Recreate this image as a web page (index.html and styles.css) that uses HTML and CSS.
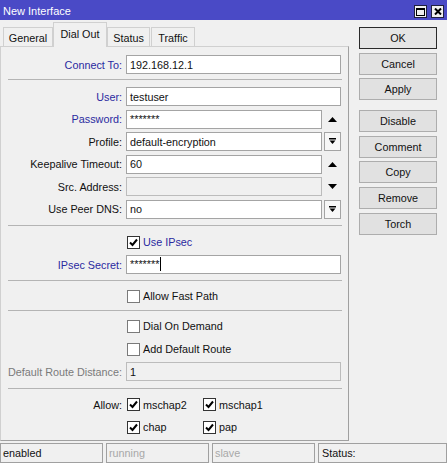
FILE: index.html
```html
<!DOCTYPE html>
<html>
<head>
<meta charset="utf-8">
<link rel="stylesheet" href="styles.css">
</head>
<body>
<div class="window">
  <div class="titlebar">
    <span class="title">New Interface</span>
    <div class="tb-btns">
      <span class="tb-btn"><svg width="9" height="8" viewBox="0 0 9 8"><rect x="0.5" y="0.5" width="8" height="7" fill="none" stroke="#000"/><rect x="0" y="0" width="9" height="2" fill="#000"/></svg></span>
      <span class="tb-btn"><svg width="8" height="7" viewBox="0 0 8 7"><path d="M1 0.5L7 6.5M7 0.5L1 6.5" stroke="#000" stroke-width="2" fill="none"/></svg></span>
    </div>
  </div>
  <div class="main">
    <div class="left">
      <div class="tabs">
        <div class="tab t-general">General</div>
        <div class="tab t-dial active">Dial Out</div>
        <div class="tab t-status">Status</div>
        <div class="tab t-traffic">Traffic</div>
      </div>
      <div class="panel">
        <div class="row first">
          <span class="lbl blue">Connect To:</span>
          <div class="field w-long">192.168.12.1</div>
        </div>
        <div class="sep s1"></div>
        <div class="row r-user">
          <span class="lbl blue">User:</span>
          <div class="field w-long">testuser</div>
        </div>
        <div class="row">
          <span class="lbl blue">Password:</span>
          <div class="field w-short stars">*******</div>
          <span class="tri"><svg width="9" height="5" viewBox="0 0 9 5"><path d="M0 5L4.5 0L9 5z" fill="#000"/></svg></span>
        </div>
        <div class="row">
          <span class="lbl">Profile:</span>
          <div class="field w-short">default-encryption</div>
          <span class="dd"><svg width="7" height="7" viewBox="0 0 7 7"><rect x="0" y="0" width="7" height="1.5" fill="#000"/><path d="M0.5 2.5H6.5L3.5 6z" fill="#000"/></svg></span>
        </div>
        <div class="row">
          <span class="lbl">Keepalive Timeout:</span>
          <div class="field w-short">60</div>
          <span class="tri"><svg width="9" height="5" viewBox="0 0 9 5"><path d="M0 5L4.5 0L9 5z" fill="#000"/></svg></span>
        </div>
        <div class="row">
          <span class="lbl">Src. Address:</span>
          <div class="field w-short disabled"></div>
          <span class="tri"><svg width="9" height="5" viewBox="0 0 9 5"><path d="M0 0L9 0L4.5 5z" fill="#000"/></svg></span>
        </div>
        <div class="row">
          <span class="lbl">Use Peer DNS:</span>
          <div class="field w-short">no</div>
          <span class="dd"><svg width="7" height="7" viewBox="0 0 7 7"><rect x="0" y="0" width="7" height="1.5" fill="#000"/><path d="M0.5 2.5H6.5L3.5 6z" fill="#000"/></svg></span>
        </div>
        <div class="sep s2"></div>
        <div class="row r-ipsec">
          <span class="lbl"></span>
          <span class="opt">
            <span class="cb checked"><svg width="11" height="11" viewBox="0 0 11 11"><path d="M2 5.5L4.5 8L9 2.5" stroke="#000" stroke-width="2" fill="none"/></svg></span>
            <span class="cb-text blue">Use IPsec</span>
          </span>
        </div>
        <div class="row">
          <span class="lbl blue">IPsec Secret:</span>
          <div class="field w-long stars">*******<span class="caret"></span></div>
        </div>
        <div class="sep s3"></div>
        <div class="row r-fast">
          <span class="lbl"></span>
          <span class="opt">
            <span class="cb"></span>
            <span class="cb-text">Allow Fast Path</span>
          </span>
        </div>
        <div class="sep s4"></div>
        <div class="row r-dial">
          <span class="lbl"></span>
          <span class="opt">
            <span class="cb"></span>
            <span class="cb-text">Dial On Demand</span>
          </span>
        </div>
        <div class="row">
          <span class="lbl"></span>
          <span class="opt">
            <span class="cb"></span>
            <span class="cb-text">Add Default Route</span>
          </span>
        </div>
        <div class="row">
          <span class="lbl gray">Default Route Distance:</span>
          <div class="field w-long disabled">1</div>
        </div>
        <div class="sep s5"></div>
        <div class="row r-allow">
          <span class="lbl">Allow:</span>
          <span class="opt w76">
            <span class="cb checked"><svg width="11" height="11" viewBox="0 0 11 11"><path d="M2 5.5L4.5 8L9 2.5" stroke="#000" stroke-width="2" fill="none"/></svg></span>
            <span class="cb-text">mschap2</span>
          </span>
          <span class="opt">
            <span class="cb checked"><svg width="11" height="11" viewBox="0 0 11 11"><path d="M2 5.5L4.5 8L9 2.5" stroke="#000" stroke-width="2" fill="none"/></svg></span>
            <span class="cb-text">mschap1</span>
          </span>
        </div>
        <div class="row">
          <span class="lbl"></span>
          <span class="opt w76">
            <span class="cb checked"><svg width="11" height="11" viewBox="0 0 11 11"><path d="M2 5.5L4.5 8L9 2.5" stroke="#000" stroke-width="2" fill="none"/></svg></span>
            <span class="cb-text">chap</span>
          </span>
          <span class="opt">
            <span class="cb checked"><svg width="11" height="11" viewBox="0 0 11 11"><path d="M2 5.5L4.5 8L9 2.5" stroke="#000" stroke-width="2" fill="none"/></svg></span>
            <span class="cb-text">pap</span>
          </span>
        </div>
      </div>
    </div>
    <div class="buttons">
      <div class="btn ok">OK</div>
      <div class="btn">Cancel</div>
      <div class="btn">Apply</div>
      <div class="btn b-disable">Disable</div>
      <div class="btn">Comment</div>
      <div class="btn">Copy</div>
      <div class="btn">Remove</div>
      <div class="btn">Torch</div>
    </div>
  </div>
  <div class="statusbar">
    <div class="sb">enabled</div>
    <div class="sb dim">running</div>
    <div class="sb dim">slave</div>
    <div class="sb last">Status:</div>
  </div>
</div>
</body>
</html>
```

FILE: styles.css
```css
* { box-sizing: border-box; margin: 0; padding: 0; }
html, body { width: 447px; height: 463px; overflow: hidden; }
body {
  background: #f0f0f0;
  font-family: "Liberation Sans", Arial, sans-serif;
  font-size: 10.8px;
  color: #111;
}
.window { width: 447px; height: 463px; display: flex; flex-direction: column; }

.titlebar {
  height: 20px;
  background: #4a4ac6;
  color: #fff;
  display: flex;
  align-items: center;
  padding-left: 3px;
  flex: none;
  font-size: 11px;
}
.title { flex: 1; padding-top: 1px; }
.tb-btns { display: flex; gap: 4px; margin-right: 3px; align-self: flex-start; margin-top: 5px; }
.tb-btn {
  width: 13px; height: 13px;
  background: #f0f0f0;
  border: 1px solid #202040;
  display: flex; align-items: center; justify-content: center;
}

.main { display: flex; height: 422px; flex: none; }
.left { width: 349px; display: flex; flex-direction: column; flex: none; }

.tabs { height: 26px; display: flex; align-items: flex-end; flex: none; }
.tab {
  height: 19px;
  border: 1px solid #d0d0d0;
  border-bottom: none;
  background: #f0f0f0;
  display: flex; align-items: center; justify-content: center;
  padding-top: 1px;
}
.tab.active {
  height: 25px;
  margin-bottom: -1px;
  position: relative;
  z-index: 1;
  padding-top: 0;
  padding-bottom: 2px;
}
.t-general { margin-left: 3px; width: 50px; }
.t-dial { width: 54px; }
.t-status { width: 43px; }
.t-traffic { margin-left: 1px; width: 44px; }

.panel {
  height: 395px;
  border-top: 1px solid #d0d0d0;
  border-left: 1px solid #d0d0d0;
  border-right: 1px solid #a0a0a0;
  border-bottom: 1px solid #a0a0a0;
  padding-top: 8px;
  display: flex;
  flex-direction: column;
}

.row { display: flex; align-items: center; height: 19px; margin-top: 3.6px; flex: none; }
.row.first { margin-top: 0; }
.lbl { width: 121px; text-align: right; flex: none; white-space: nowrap; }
.blue { color: #2a2aa0; }
.gray { color: #7a7a7a; }

.field {
  height: 19px;
  margin-left: 4px;
  border: 1px solid #a4a4a4;
  background: #fff;
  padding-left: 3px;
  display: flex;
  align-items: center;
  flex: none;
  white-space: nowrap;
}
.field.disabled { background: #f0f0f0; border-color: #bcbcbc; }
.w-long { width: 215px; }
.w-short { width: 196px; }
.stars { align-items: flex-start; padding-top: 2px; }
.caret { display: inline-block; width: 1px; height: 14px; background: #000; margin-left: 1px; margin-top: -1px; }

.tri { width: 19px; display: flex; justify-content: center; padding-left: 2px; flex: none; }
.tri svg { display: block; }
.dd {
  width: 17px; height: 19px;
  margin-left: 2px;
  border: 1px solid #a4a4a4;
  background: #f7f7f7;
  display: flex; align-items: center; justify-content: center;
  flex: none;
}

.sep { height: 1px; background: #b4b4b4; margin-left: 7px; width: 334px; flex: none; }
.s1 { margin-top: 5px; }
.r-user { margin-top: 7px; }
.s2 { margin-top: 6px; }
.r-ipsec { margin-top: 6.6px; }
.s3 { margin-top: 5.5px; }
.r-fast { margin-top: 6px; }
.s4 { margin-top: 4.8px; }
.r-dial { margin-top: 5.5px; }
.s5 { margin-top: 6.5px; }
.r-allow { margin-top: 6.5px; }

.opt { display: flex; align-items: center; flex: none; }
.lbl + .opt { margin-left: 5px; }
.w76 { width: 76px; }
.cb {
  width: 13px; height: 13px;
  border: 1px solid #7a7a7a;
  background: #fff;
  display: flex; align-items: center; justify-content: center;
  flex: none;
}
.cb.checked { border-color: #333; }
.cb svg { display: block; }
.cb-text { margin-left: 3px; white-space: nowrap; }

.buttons { margin-left: 10px; width: 78px; padding-top: 7px; display: flex; flex-direction: column; flex: none; }
.btn {
  height: 22px;
  border: 1px solid #adadad;
  background: #e1e1e1;
  display: flex; align-items: center; justify-content: center;
  margin-bottom: 3.7px;
  flex: none;
}
.btn.ok { border-color: #2a2a2a; background: #e5e5e5; }
.b-disable { margin-top: 6px; }

.statusbar { display: flex; gap: 3px; height: 20px; margin-top: 1px; flex: none; }
.sb {
  width: 103px;
  border: 1px solid #a0a0a0;
  padding-left: 2px;
  display: flex; align-items: center;
  flex: none;
}
.sb.dim { color: #a8a8a8; }
.sb.last { flex: 1; padding-left: 3px; }
```
